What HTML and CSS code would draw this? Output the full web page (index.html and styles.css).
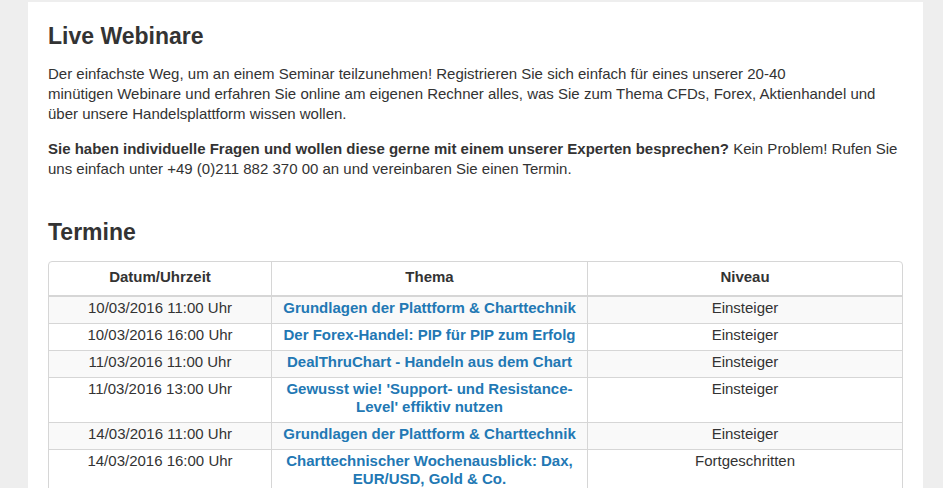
FILE: index.html
```html
<!DOCTYPE html>
<html lang="de">
<head>
<meta charset="utf-8">
<title>Live Webinare</title>
<link rel="stylesheet" href="styles.css">
</head>
<body>
<div class="panel">
  <h1 class="title">Live Webinare</h1>
  <p class="text">Der einfachste Weg, um an einem Seminar teilzunehmen! Registrieren Sie sich einfach für eines unserer 20-40<br>minütigen Webinare und erfahren Sie online am eigenen Rechner alles, was Sie zum Thema CFDs, Forex, Aktienhandel und über unsere Handelsplattform wissen wollen.</p>
  <p class="text"><strong>Sie haben individuelle Fragen und wollen diese gerne mit einem unserer Experten besprechen?</strong> Kein Problem! Rufen Sie uns einfach unter +49 (0)211 882 370 00 an und vereinbaren Sie einen Termin.</p>
  <h2 class="title title-sub">Termine</h2>
  <table class="dates">
    <colgroup><col class="c1"><col class="c2"><col class="c3"></colgroup>
    <thead>
      <tr><th>Datum/Uhrzeit</th><th>Thema</th><th>Niveau</th></tr>
    </thead>
    <tbody>
      <tr><td>10/03/2016 11:00 Uhr</td><td><a class="topic" href="#">Grundlagen der Plattform &amp; Charttechnik</a></td><td>Einsteiger</td></tr>
      <tr><td>10/03/2016 16:00 Uhr</td><td><a class="topic" href="#">Der Forex-Handel: PIP für PIP zum Erfolg</a></td><td>Einsteiger</td></tr>
      <tr><td>11/03/2016 11:00 Uhr</td><td><a class="topic" href="#">DealThruChart - Handeln aus dem Chart</a></td><td>Einsteiger</td></tr>
      <tr><td>11/03/2016 13:00 Uhr</td><td><a class="topic" href="#">Gewusst wie! 'Support- und Resistance-Level' effiktiv nutzen</a></td><td>Einsteiger</td></tr>
      <tr><td>14/03/2016 11:00 Uhr</td><td><a class="topic" href="#">Grundlagen der Plattform &amp; Charttechnik</a></td><td>Einsteiger</td></tr>
      <tr><td>14/03/2016 16:00 Uhr</td><td><a class="topic" href="#">Charttechnischer Wochenausblick: Dax, EUR/USD, Gold &amp; Co.</a></td><td>Fortgeschritten</td></tr>
      <tr><td>15/03/2016 11:00 Uhr</td><td><a class="topic" href="#">Grundlagen der Plattform &amp; Charttechnik</a></td><td>Einsteiger</td></tr>
    </tbody>
  </table>
</div>
</body>
</html>
```

FILE: styles.css
```css
html, body {
  margin: 0;
  padding: 0;
}
body {
  background: #eeeeee;
  font-family: "Liberation Sans", Arial, sans-serif;
  font-size: 15px;
  line-height: 20px;
  color: #333333;
}
.panel {
  background: #ffffff;
  margin: 2px 0 0 28px;
  width: 855px;
  padding: 22px 20px 20px 20px;
  min-height: 600px;
}
.title {
  font-size: 23px;
  font-weight: bold;
  line-height: 1.1;
  margin: 0 0 15px 0;
  color: #333333;
}
.title-sub {
  margin-top: 41px;
  margin-bottom: 15px;
}
.text {
  margin: 0 0 15px 0;
}
.dates {
  width: 855px;
  table-layout: fixed;
  border-collapse: separate;
  border-spacing: 0;
  border: 1px solid #d6d6d6;
  border-radius: 4px;
  line-height: 18px;
}
.c1 { width: 222px; }
.c2 { width: 316px; }
.c3 { width: auto; }
.dates th {
  font-weight: bold;
  text-align: center;
  padding: 6px 8px 9px;
  border-bottom: 2px solid #d6d6d6;
  border-left: 1px solid #d6d6d6;
}
.dates td {
  text-align: center;
  vertical-align: top;
  padding: 2px 8px 6px;
  border-bottom: 1px solid #d6d6d6;
  border-left: 1px solid #d6d6d6;
}
.dates th:first-child,
.dates td:first-child {
  border-left: none;
}
.dates tbody tr:nth-child(odd) td {
  background: #f9f9f9;
}
.topic {
  color: #2278b4;
  font-weight: bold;
  text-decoration: none;
}
```
